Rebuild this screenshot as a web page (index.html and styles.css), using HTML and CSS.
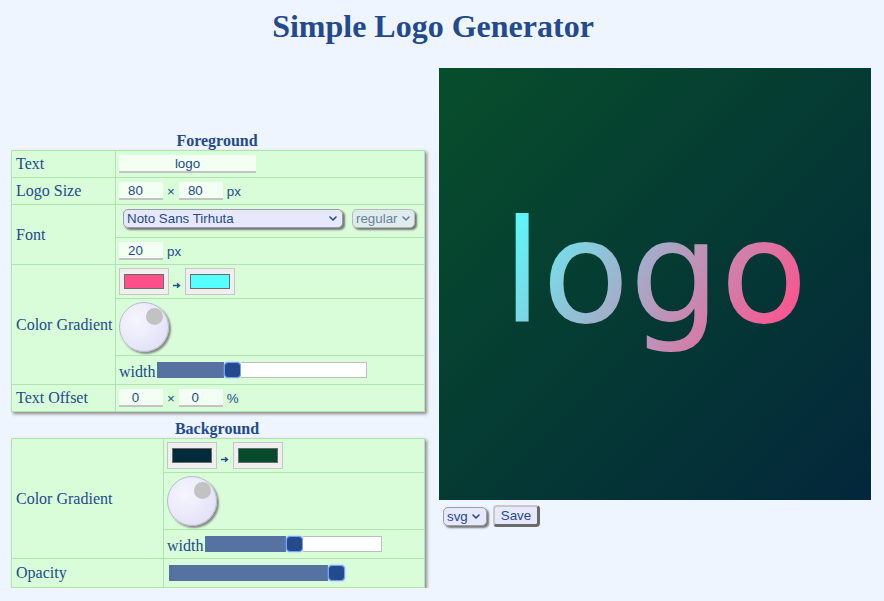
FILE: index.html
```html
<!DOCTYPE html>
<html lang="en">
<head>
<meta charset="utf-8">
<title>Simple Logo Generator</title>
<link rel="stylesheet" href="styles.css">
</head>
<body>
<h1 class="title">Simple Logo Generator</h1>
<div class="main">
  <div class="controls">
    <section class="panel">
      <div class="caption">Foreground</div>
      <div class="grid fg">
        <div class="label">Text</div>
        <div class="value"><input class="txt wide" type="text" value="logo"></div>

        <div class="label">Logo Size</div>
        <div class="value"><input class="txt num" type="text" value="80"><span class="unit">×</span><input class="txt num" type="text" value="80"><span class="unit">px</span></div>

        <div class="label span2">Font</div>
        <div class="value selrow">
          <span class="sel font-sel"><select><option>Noto Sans Tirhuta</option></select><svg class="chev" viewBox="0 0 8 5"><path d="M1 1l3 3 3-3"/></svg></span>
          <span class="sel reg-sel"><select><option>regular</option></select><svg class="chev" viewBox="0 0 8 5"><path d="M1 1l3 3 3-3"/></svg></span>
        </div>
        <div class="value"><input class="txt num" type="text" value="20"><span class="unit">px</span></div>

        <div class="label span3">Color Gradient</div>
        <div class="value"><input class="swatch" type="color" value="#ff4f8b"><svg class="arrow" viewBox="0 0 8 7"><path d="M0 3.5H6.3M4 1.2l2.6 2.3L4 5.8"/></svg><input class="swatch" type="color" value="#55ffff"></div>
        <div class="value"><div class="knob"><div class="dot"></div></div></div>
        <div class="value tight"><span class="word">width</span><div class="range fgw"><div class="fill" style="width:67px"></div><div class="thumb"></div><div class="rest"></div></div></div>

        <div class="label">Text Offset</div>
        <div class="value"><input class="txt num" type="text" value="0"><span class="unit">×</span><input class="txt num" type="text" value="0"><span class="unit">%</span></div>
      </div>
    </section>

    <section class="panel">
      <div class="caption">Background</div>
      <div class="grid bg">
        <div class="label span3">Color Gradient</div>
        <div class="value"><input class="swatch" type="color" value="#032a3a"><svg class="arrow" viewBox="0 0 8 7"><path d="M0 3.5H6.3M4 1.2l2.6 2.3L4 5.8"/></svg><input class="swatch" type="color" value="#064c2c"></div>
        <div class="value"><div class="knob"><div class="dot"></div></div></div>
        <div class="value tight"><span class="word">width</span><div class="range bgw"><div class="fill" style="width:81px"></div><div class="thumb"></div><div class="rest"></div></div></div>

        <div class="label">Opacity</div>
        <div class="value"><div class="range opw"><div class="fill" style="width:159px"></div><div class="thumb"></div></div></div>
      </div>
    </section>
  </div>

  <div class="output">
    <svg class="preview" width="432" height="432" viewBox="0 0 432 432">
      <defs>
        <linearGradient id="bgGrad" x1="0" y1="0" x2="1" y2="1">
          <stop offset="0" stop-color="#074e2b"/>
          <stop offset="1" stop-color="#03273b"/>
        </linearGradient>
        <linearGradient id="fgGrad" x1="0.05" y1="0" x2="1.12" y2="0.35">
          <stop offset="0" stop-color="#55ffff"/>
          <stop offset="1" stop-color="#ff4f8b"/>
        </linearGradient>
      </defs>
      <rect width="432" height="432" fill="url(#bgGrad)"/>
      <text class="logo-text" x="216" y="254" text-anchor="middle" fill="url(#fgGrad)">logo</text>
    </svg>
    <div class="actions">
      <span class="sel fmt-sel"><select><option>svg</option></select><svg class="chev" viewBox="0 0 8 5"><path d="M1 1l3 3 3-3"/></svg></span>
      <button class="save" type="button">Save</button>
    </div>
  </div>
</div>
</body>
</html>
```

FILE: styles.css
```css
html {
  background: #eef5ff;
}

body {
  margin: 8px;
  background: #eef5ff;
  color: #234a8c;
  font-family: "Liberation Serif", "Times New Roman", serif;
  font-size: 16px;
}

.title {
  margin: 0;
  font-size: 32px;
  line-height: 37px;
  font-weight: bold;
  text-align: center;
  padding-right: 18px;
  color: #234a8c;
}

.main {
  display: flex;
  align-items: flex-start;
  margin-top: 23px;
}

.controls {
  flex: none;
  width: 414px;
  margin-top: 64px;
  padding-left: 3px;
}

.panel + .panel {
  margin-top: 8px;
}

.caption {
  font-weight: bold;
  text-align: center;
  height: 18px;
  line-height: 18px;
  padding-right: 2px;
}

.grid {
  display: grid;
  background: #aee4ae;
  padding: 1px;
  gap: 1px;
  box-shadow: 2px 2px 3px #8a8a8a;
}

.fg {
  grid-template-columns: 103px 308px;
  grid-template-rows: 26px 26px 32px 26px 33px 56px 28px 26px;
}

.bg {
  grid-template-columns: 151px 260px;
  grid-template-rows: 33px 56px 28px 28px;
}

.label {
  grid-column: 1;
  background: #d9fdd9;
  display: flex;
  align-items: center;
  padding-left: 4px;
}

.value {
  grid-column: 2;
  background: #d9fdd9;
  display: flex;
  align-items: center;
  padding-left: 3px;
  gap: 4px;
}

.value.selrow {
  align-items: flex-start;
  padding-top: 4px;
}

.span2 {
  grid-row: span 2;
}

.span3 {
  grid-row: span 3;
}

.value.tight {
  gap: 0;
}

.word {
  margin-top: 3px;
}

.txt {
  box-sizing: border-box;
  height: 18px;
  margin: 0;
  padding: 0;
  border: none;
  border-bottom: 2px solid #c3c3c3;
  background: #f3fff3;
  color: #234a8c;
  font: 13.33px "Liberation Sans", Arial, sans-serif;
  text-align: center;
  outline: none;
}

.txt.wide {
  width: 137px;
}

.txt.num {
  width: 44px;
  padding-right: 14px;
  padding-left: 3px;
}

.unit {
  font: 13.33px "Liberation Sans", Arial, sans-serif;
  color: #234a8c;
}

.sel {
  position: relative;
  display: inline-flex;
}

.sel select {
  -webkit-appearance: none;
  appearance: none;
  box-sizing: border-box;
  height: 19px;
  margin: 0;
  padding: 0 12px 0 3px;
  border: 1px solid #9c9cae;
  border-radius: 5px;
  background: #e8e8fc;
  color: #234a8c;
  font: 13.33px "Liberation Sans", Arial, sans-serif;
  box-shadow: 2px 2px 2px #777;
  outline: none;
}

.sel .chev {
  position: absolute;
  right: 6px;
  top: 7px;
  width: 8px;
  height: 5px;
  fill: none;
  stroke: #234a8c;
  stroke-width: 1.6;
  stroke-linecap: round;
  stroke-linejoin: round;
  pointer-events: none;
}

.font-sel {
  margin-left: 4px;
}

.font-sel select {
  width: 220px;
}

.reg-sel {
  margin-left: 5px;
}

.reg-sel select {
  width: 63px;
  background: #e0ecec;
  color: #6682a0;
  border-color: #b0baba;
}

.reg-sel .chev {
  right: 5px;
  stroke: #6682a0;
}

.swatch {
  -webkit-appearance: none;
  appearance: none;
  box-sizing: border-box;
  width: 50px;
  height: 27px;
  margin: 0;
  padding: 1px 2px;
  border: 1px solid #c6c6c6;
  background: #efefef;
}

.swatch::-webkit-color-swatch-wrapper {
  padding: 4px 2px;
}

.swatch::-webkit-color-swatch {
  border: 1px solid #6b6b6b;
}

.arrow {
  width: 8px;
  height: 7px;
  margin-top: 8px;
  fill: none;
  stroke: #234a8c;
  stroke-width: 1.3;
}

.knob {
  position: relative;
  box-sizing: border-box;
  width: 50px;
  height: 50px;
  border-radius: 50%;
  border: 1px solid #b9b9c9;
  background: radial-gradient(circle at 35% 35%, #f6f6ff, #e4e4f8 70%);
  box-shadow: 2px 2px 2px #8a8a8a;
}

.knob .dot {
  position: absolute;
  left: 26px;
  top: 5px;
  width: 17px;
  height: 17px;
  border-radius: 50%;
  background: #c2c2c2;
}

.range {
  display: flex;
  height: 16px;
  margin: 0 2px;
}

.fgw {
  width: 210px;
}

.bgw {
  width: 177px;
}

.opw {
  width: 176px;
}

.range .fill {
  background: #5572a0;
}

.range .thumb {
  box-sizing: border-box;
  width: 17px;
  background: #234a8c;
  border: 1px solid #74a0ff;
  border-radius: 4px;
  box-shadow: 0 0 2px #8ab0ff;
}

.range .rest {
  flex: 1;
  background: #fff;
  border: 1px solid #bdbdbd;
  border-left: none;
}

.output {
  flex: none;
  margin-left: 14px;
}

.preview {
  display: block;
}

.logo-text {
  font-family: "DejaVu Sans", sans-serif;
  font-size: 143px;
}

.actions {
  display: flex;
  align-items: center;
  margin-top: 5px;
  padding-left: 4px;
  gap: 6px;
}

.fmt-sel select {
  width: 44px;
  padding-right: 10px;
}

.fmt-sel .chev {
  right: 7px;
}

.save {
  box-sizing: border-box;
  width: 47px;
  height: 22px;
  margin: 0;
  padding: 0;
  border-style: solid;
  border-width: 2px 3px 3px 2px;
  border-color: #c8c8c8 #6a6a6a #6a6a6a #c8c8c8;
  border-radius: 4px;
  background: #e8e8fc;
  color: #234a8c;
  font: 13.33px "Liberation Sans", Arial, sans-serif;
}
```
